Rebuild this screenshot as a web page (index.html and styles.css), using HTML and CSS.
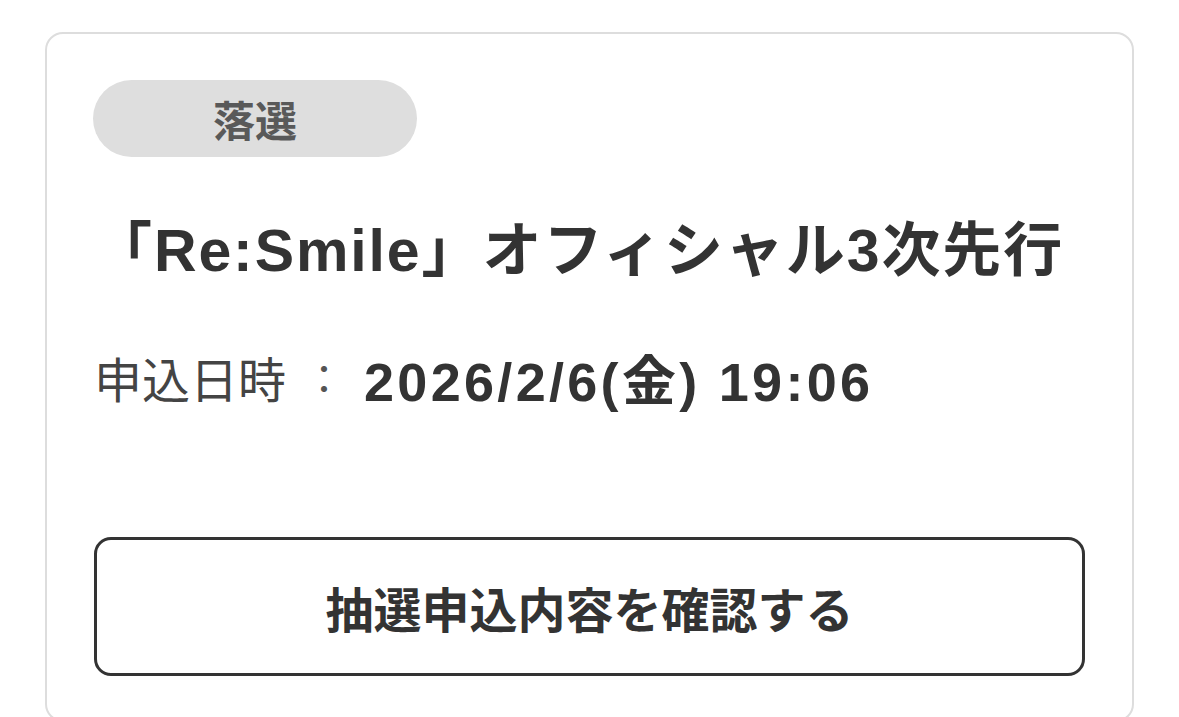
FILE: index.html
```html
<!DOCTYPE html>
<html lang="ja">
<head>
<meta charset="utf-8">
<link rel="stylesheet" href="styles.css">
</head>
<body>
<div class="card">
  <div class="badge">落選</div>
  <h1 class="title">「Re:Smile」オフィシャル3次先行</h1>
  <div class="date-row">
    <span class="date-label">申込日時</span>
    <span class="date-sep">：</span>
    <span class="date-value">2026/2/6(金) 19:06</span>
  </div>
  <button class="confirm-btn" type="button">抽選申込内容を確認する</button>
</div>
</body>
</html>
```

FILE: styles.css
```css
html, body {
  margin: 0;
  padding: 0;
  background: #ffffff;
  overflow: hidden;
}

body {
  font-family: "Liberation Sans", "Noto Sans CJK JP", sans-serif;
  color: #333333;
}

.card {
  box-sizing: border-box;
  margin: 32px 0 0 45px;
  width: 1089px;
  height: 690px;
  border: 2px solid #dddddd;
  border-radius: 18px;
  padding: 46px 45px 0 46px;
  display: flex;
  flex-direction: column;
}

.badge {
  width: 324px;
  height: 77px;
  border-radius: 39px;
  background: #dedede;
  color: #595959;
  font-size: 42px;
  font-weight: 700;
  display: flex;
  align-items: center;
  justify-content: center;
  font-family: "Noto Sans CJK JP", sans-serif;
}

.title {
  margin: 53px 0 0 0;
  padding-right: 23px;
  font-size: 59px;
  line-height: 82px;
  font-weight: 700;
  text-align: center;
  color: #333333;
  letter-spacing: 1.9px;
  white-space: nowrap;
}

.date-row {
  margin-top: 53px;
  height: 64px;
  display: flex;
  align-items: center;
  padding-left: 1px;
}

.date-label {
  font-family: "Noto Sans CJK JP", sans-serif;
  font-size: 48px;
  font-weight: 400;
  color: #444444;
}

.date-sep {
  font-family: "Noto Sans CJK JP", sans-serif;
  font-size: 40px;
  color: #555555;
  margin-left: 18px;
  width: 60px;
}

.date-value {
  font-size: 54px;
  font-weight: 700;
  color: #333333;
  letter-spacing: 3.3px;
}

.confirm-btn {
  margin-top: 128px;
  box-sizing: border-box;
  width: 991px;
  height: 139px;
  border: 3px solid #333333;
  border-radius: 17px;
  background: #ffffff;
  color: #333333;
  font-family: "Noto Sans CJK JP", sans-serif;
  font-size: 48px;
  font-weight: 700;
  padding: 0;
  margin-left: 1px;
}
```
